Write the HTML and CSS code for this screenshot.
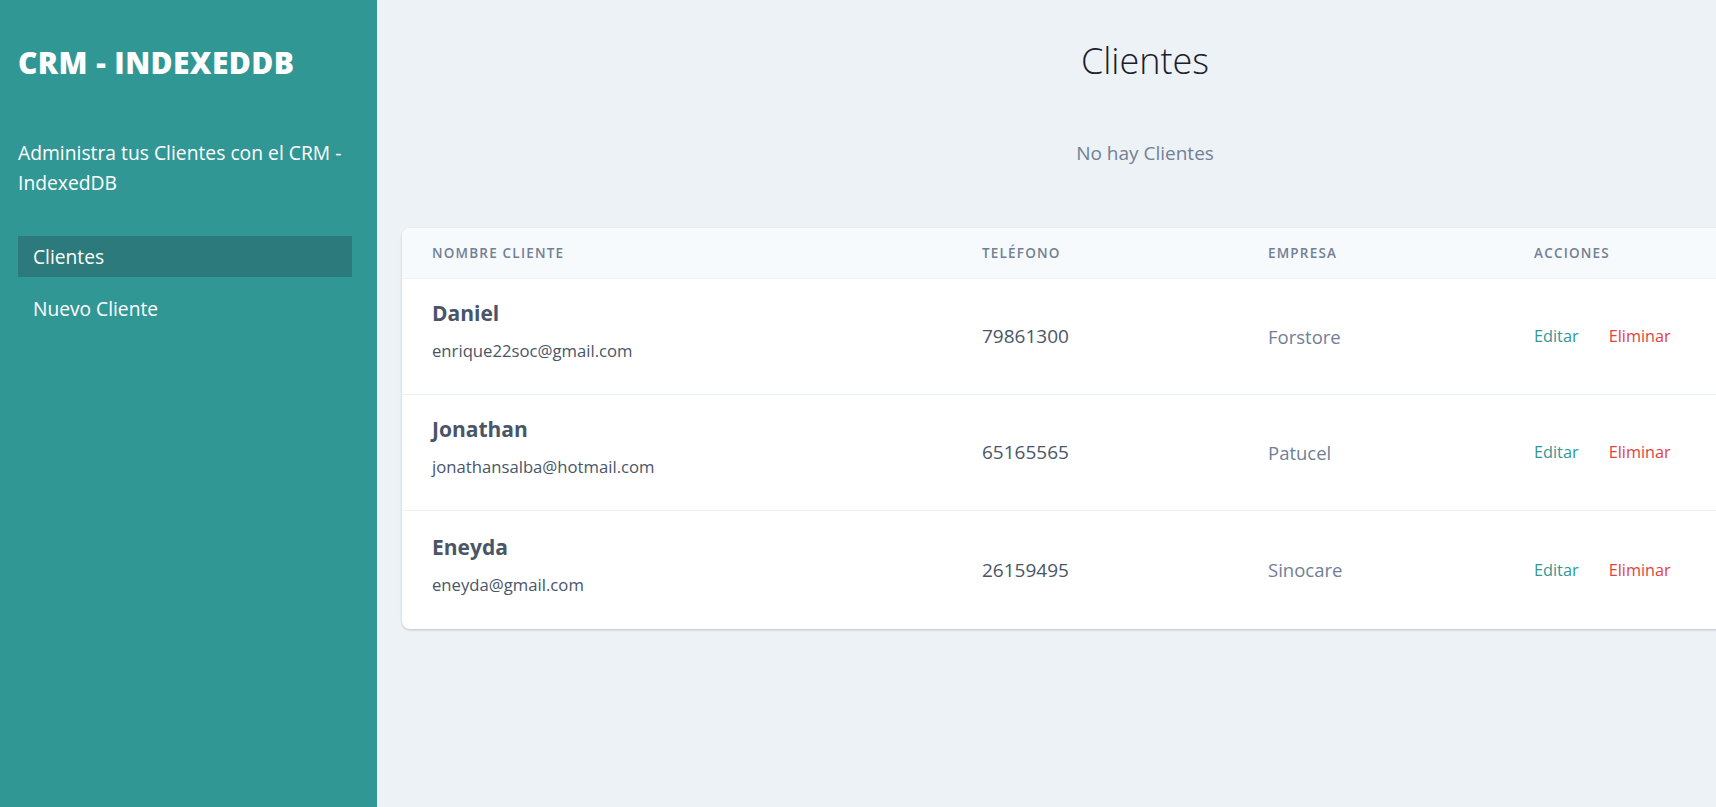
FILE: index.html
```html
<!DOCTYPE html>
<html lang="es">
<head>
<meta charset="utf-8">
<title>CRM - IndexedDB</title>
<link rel="stylesheet" href="styles.css">
</head>
<body>
<div class="layout">
  <aside class="sidebar">
    <h1 class="brand">CRM - INDEXEDDB</h1>
    <p class="tagline">Administra tus Clientes con el CRM - IndexedDB</p>
    <nav class="nav">
      <a class="nav-link active" href="#">Clientes</a>
      <a class="nav-link" href="#">Nuevo Cliente</a>
    </nav>
  </aside>
  <main class="main">
    <h2 class="title">Clientes</h2>
    <p class="empty">No hay Clientes</p>
    <div class="card">
      <table class="table">
        <colgroup>
          <col class="c-name"><col class="c-phone"><col class="c-company"><col class="c-actions">
        </colgroup>
        <thead>
          <tr>
            <th>Nombre Cliente</th>
            <th>Teléfono</th>
            <th>Empresa</th>
            <th>Acciones</th>
          </tr>
        </thead>
        <tbody>
          <tr>
            <td><div class="name">Daniel</div><div class="email">enrique22soc@gmail.com</div></td>
            <td class="phone">79861300</td>
            <td class="company">Forstore</td>
            <td class="actions"><a class="edit" href="#">Editar</a><a class="delete" href="#">Eliminar</a></td>
          </tr>
          <tr>
            <td><div class="name">Jonathan</div><div class="email">jonathansalba@hotmail.com</div></td>
            <td class="phone">65165565</td>
            <td class="company">Patucel</td>
            <td class="actions"><a class="edit" href="#">Editar</a><a class="delete" href="#">Eliminar</a></td>
          </tr>
          <tr>
            <td><div class="name">Eneyda</div><div class="email">eneyda@gmail.com</div></td>
            <td class="phone">26159495</td>
            <td class="company">Sinocare</td>
            <td class="actions"><a class="edit" href="#">Editar</a><a class="delete" href="#">Eliminar</a></td>
          </tr>
        </tbody>
      </table>
    </div>
  </main>
</div>
</body>
</html>
```

FILE: styles.css
```css
* { box-sizing: border-box; }
html, body {
  margin: 0;
  padding: 0;
  height: 100%;
  overflow: hidden;
}
body {
  font-family: "Open Sans", "Noto Sans", "Liberation Sans", sans-serif;
  background: #edf2f7;
  color: #4a5568;
}
.layout {
  display: flex;
  height: 807px;
  width: 1913px;
}
.sidebar {
  width: 377px;
  flex-shrink: 0;
  background: #319795;
  padding: 42px 25px 0 18px;
  color: #fff;
}
.brand {
  margin: 0;
  font-size: 30px;
  line-height: 42px;
  font-weight: 800;
  letter-spacing: 0.4px;
}
.tagline {
  margin: 54px 0 0;
  font-size: 19.3px;
  line-height: 30px;
}
.nav {
  margin-top: 38px;
  display: flex;
  flex-direction: column;
  gap: 11px;
}
.nav-link {
  display: block;
  height: 41px;
  line-height: 41px;
  padding: 0 15px;
  color: #fff;
  text-decoration: none;
  font-size: 19.2px;
}
.nav-link.active {
  background: #2c7a7b;
}
.main {
  width: 1536px;
  flex-shrink: 0;
  padding: 36px 25px 0;
}
.title {
  margin: 0;
  text-align: center;
  font-size: 36px;
  line-height: 50px;
  font-weight: 300;
  color: #1a202c;
}
.empty {
  margin: 54px 0 0;
  text-align: center;
  font-size: 19px;
  line-height: 26px;
  color: #718096;
}
.card {
  margin-top: 62px;
  background: #fff;
  border-radius: 8px;
  overflow: hidden;
  box-shadow: 0 1px 3px rgba(0,0,0,0.12), 0 1px 2px rgba(0,0,0,0.08);
}
.table {
  width: 100%;
  border-collapse: collapse;
  table-layout: fixed;
}
.c-name { width: 550px; }
.c-phone { width: 286px; }
.c-company { width: 266px; }
.table th {
  height: 50px;
  padding: 0 30px;
  text-align: left;
  background: #f7fafc;
  border-bottom: 1px solid #edf2f7;
  font-size: 13.5px;
  font-weight: 600;
  letter-spacing: 1.2px;
  text-transform: uppercase;
  color: #718096;
}
.table td {
  height: 116px;
  padding: 0 30px;
  vertical-align: middle;
  border-bottom: 1px solid #edf2f7;
}
.table tbody tr:last-child td { border-bottom: none; height: 119px; }
.name {
  font-size: 21px;
  line-height: 30px;
  font-weight: 700;
  color: #4a5568;
}
.email {
  font-size: 16.7px;
  line-height: 46px;
  color: #4a5568;
}
.phone {
  font-size: 19px;
  color: #4a5568;
}
.company {
  font-size: 18.5px;
  color: #718096;
}
.actions {
  font-size: 16.3px;
}
.actions a { text-decoration: none; }
.edit { color: #319795; margin-right: 30px; }
.delete { color: #e53e3e; }
```
